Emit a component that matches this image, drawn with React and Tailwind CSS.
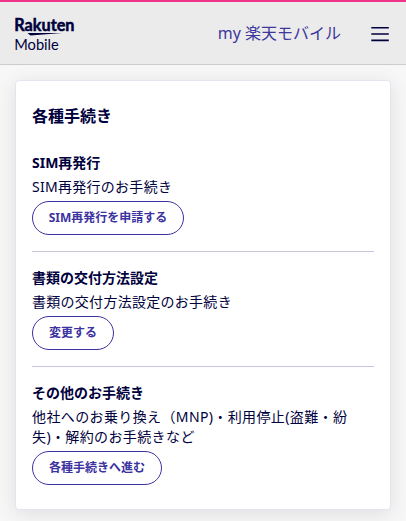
import React from "react";

const procedures = [
  {
    title: "SIM再発行",
    description: "SIM再発行のお手続き",
    button: "SIM再発行を申請する",
    buttonWidth: "w-[152px]",
    tracking: "tracking-[0.28px]",
  },
  {
    title: "書類の交付方法設定",
    description: "書類の交付方法設定のお手続き",
    button: "変更する",
    buttonWidth: "w-[82px]",
    tracking: "tracking-[0.28px]",
  },
  {
    title: "その他のお手続き",
    description: "他社へのお乗り換え（MNP)・利用停止(盗難・紛失)・解約のお手続きなど",
    button: "各種手続きへ進む",
    buttonWidth: "w-[130px]",
    tracking: "tracking-[0.38px]",
  },
];

function Logo() {
  return (
    <svg width="64" height="42" viewBox="0 0 64 42" fill="#00003c" className="overflow-visible font-['Lato',sans-serif]">
      <text x="-0.8" y="19" fontSize="16.5" fontWeight="700" stroke="#00003c" strokeWidth="0.5" textLength="60.3" lengthAdjust="spacingAndGlyphs">
        Rakuten
      </text>
      <path d="M12.5 20.9H47L15.5 23.6Z" />
      <text x="-0.8" y="38" fontSize="15.8" textLength="44.6" lengthAdjust="spacingAndGlyphs">
        Mobile
      </text>
    </svg>
  );
}

function Header() {
  return (
    <header className="flex h-[65px] items-center border-t-2 border-b border-t-[#ee3388] border-b-[#cccccc] bg-[#ebebeb] pl-[15px] pr-[17px]">
      <Logo />
      <a href="#" className="ml-auto text-[16px] leading-6 text-[#3e379c]">
        my 楽天モバイル
      </a>
      <button aria-label="メニュー" className="ml-[30px] pt-px">
        <svg width="18" height="18" viewBox="0 0 18 18" fill="none" stroke="#00003c" strokeWidth="1.6">
          <path d="M0.3 2.8H17.8M0.3 9H17.8M0.3 15.4H17.8" />
        </svg>
      </button>
    </header>
  );
}

export default function App() {
  return (
    <div className="min-h-screen bg-[#f7f7f7] font-['Noto_Sans','Noto_Sans_CJK_JP',sans-serif] text-[#00003c]" lang="ja">
      <Header />

      <main className="px-[15px] pt-[15px]">
        <section className="h-[430px] rounded-[4px] border border-[#e4e4f0] bg-white px-4 pt-[23px] shadow-[0_4px_20px_rgba(0,0,0,0.1)]">
          <h1 className="text-[16px] font-bold leading-6">各種手続き</h1>

          <div className="mt-[25px]">
            {procedures.map((item) => (
              <div
                key={item.title}
                className="mb-4 border-b border-[#c8c6dc] pb-4 last:mb-0 last:border-b-0"
              >
                <h2 className="text-[14px] font-bold leading-5">{item.title}</h2>
                <p className={`mt-1 text-[14px] leading-5 ${item.tracking}`}>{item.description}</p>
                <button
                  className={`mt-1 block h-[34px] whitespace-nowrap rounded-full border border-[#3c32a0] text-[12px] font-bold leading-4 text-[#3c32a0] ${item.buttonWidth}`}
                >
                  {item.button}
                </button>
              </div>
            ))}
          </div>
        </section>
      </main>
    </div>
  );
}
